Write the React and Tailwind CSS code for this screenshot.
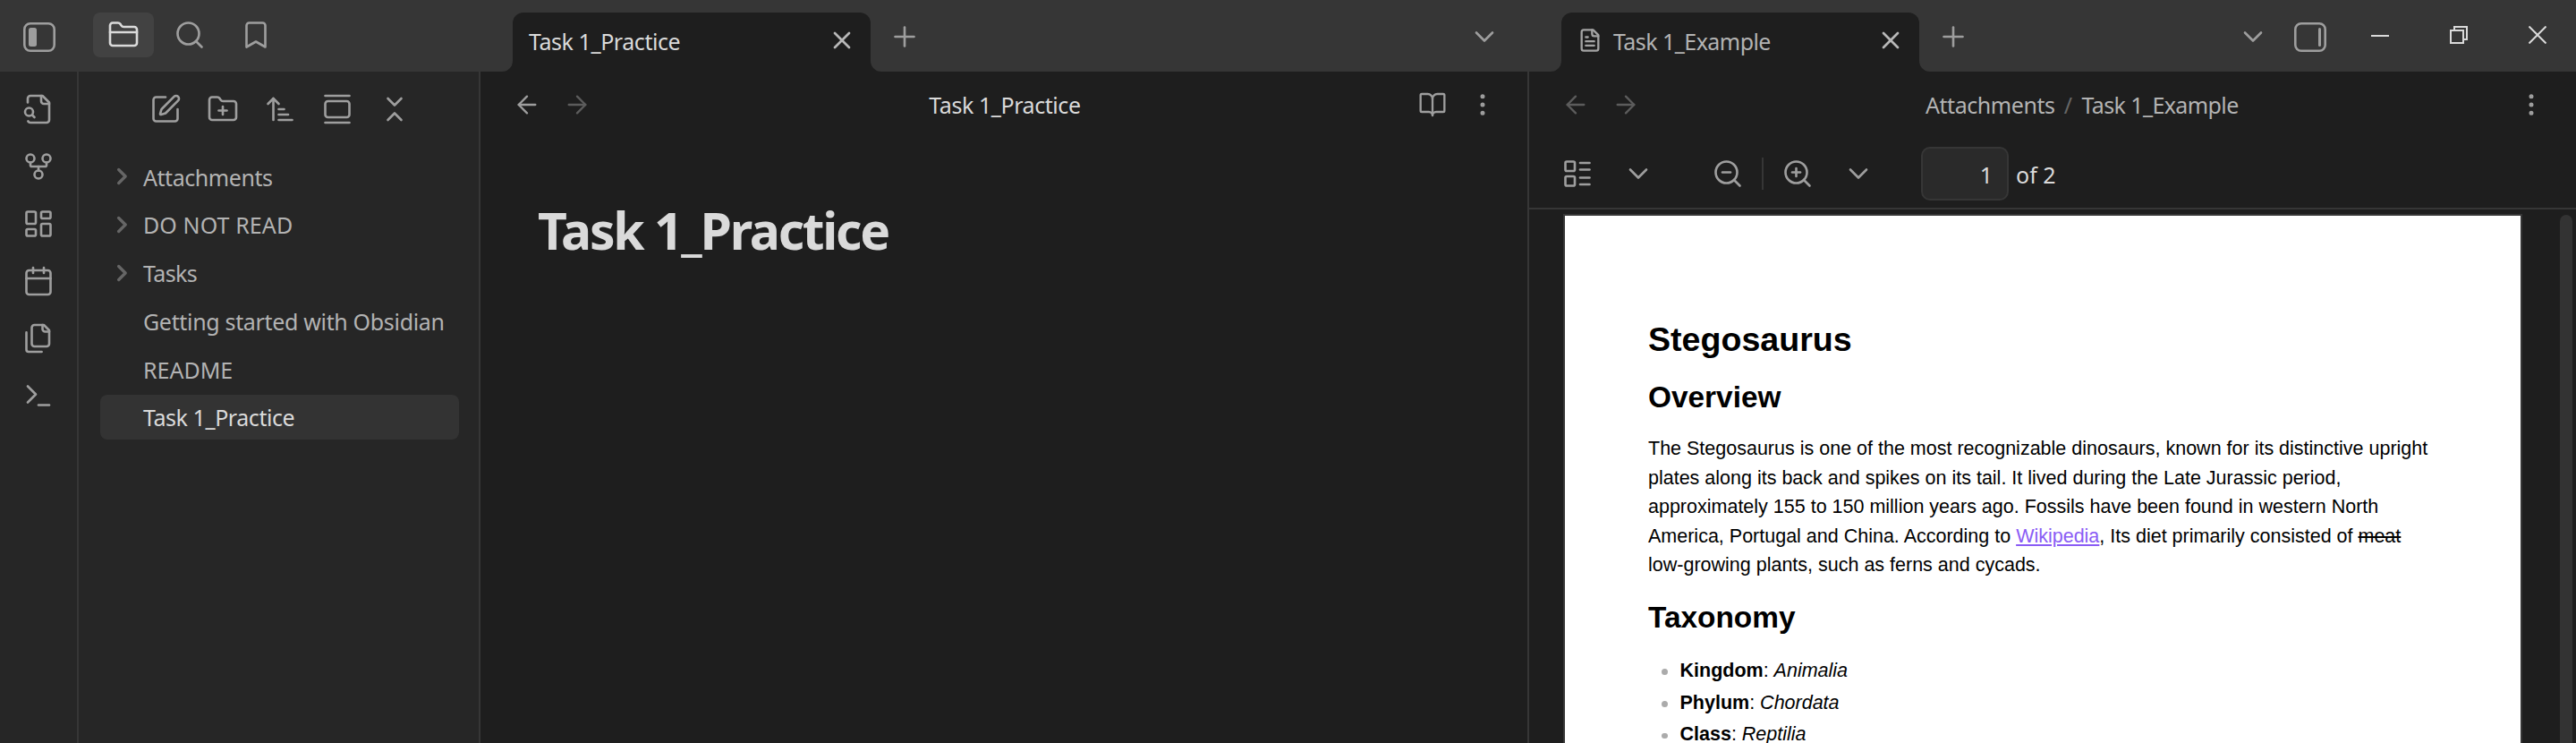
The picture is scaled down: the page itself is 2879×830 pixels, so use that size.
import React from "react";
import {
  ArrowLeft,
  ArrowRight,
  ArrowUpNarrowWide,
  BookOpen,
  Bookmark,
  Calendar,
  ChevronDown,
  ChevronsDownUp,
  FolderClosed,
  FolderPlus,
  GalleryVertical,
  GitFork,
  LayoutDashboard,
  LayoutList,
  Plus,
  Search,
  SquarePen,
  Terminal,
  X,
  ZoomIn,
  ZoomOut,
} from "lucide-react";

const ICON = "block size-9 shrink-0 text-[#9e9e9e]";
const ICON_SM = "block size-8 shrink-0 text-[#9e9e9e]";
const ICON_DIM = "block size-8 shrink-0 text-[#5c5c5c]";

function Glyph({ className, children, strokeWidth = 1.75 }) {
  return (
    <svg
      viewBox="0 0 24 24"
      fill="none"
      stroke="currentColor"
      strokeWidth={strokeWidth}
      strokeLinecap="round"
      strokeLinejoin="round"
      className={className}
    >
      {children}
    </svg>
  );
}

const FileSearch = () => (
  <Glyph className={ICON}>
    <path d="M14 2v4a2 2 0 0 0 2 2h4" />
    <path d="M4.268 21a2 2 0 0 0 1.727 1H18a2 2 0 0 0 2-2V7l-5-5H6a2 2 0 0 0-2 2v3" />
    <path d="m9 18-1.5-1.5" />
    <circle cx="5" cy="14" r="3" />
  </Glyph>
);

const Files = () => (
  <Glyph className={ICON}>
    <path d="M20 7h-3a2 2 0 0 1-2-2V2" />
    <path d="M9 18a2 2 0 0 1-2-2V4a2 2 0 0 1 2-2h7l4 4v10a2 2 0 0 1-2 2Z" />
    <path d="M3 7.6v12.8A1.6 1.6 0 0 0 4.6 22h9.8" />
  </Glyph>
);

const FileText = () => (
  <Glyph className="block size-7 shrink-0 text-[#a3a3a3]" strokeWidth={2}>
    <path d="M15 2H6a2 2 0 0 0-2 2v16a2 2 0 0 0 2 2h12a2 2 0 0 0 2-2V7Z" />
    <path d="M14 2v4a2 2 0 0 0 2 2h4" />
    <path d="M10 9H8" />
    <path d="M16 13H8" />
    <path d="M16 17H8" />
  </Glyph>
);

const MoreVertical = () => (
  <Glyph className={ICON_SM}>
    <circle cx="12" cy="12" r="1" />
    <circle cx="12" cy="5" r="1" />
    <circle cx="12" cy="19" r="1" />
  </Glyph>
);

function SidebarToggle({ side }) {
  return (
    <svg viewBox="0 0 36 33" className="mt-[25px] block h-[33px] w-9 shrink-0 text-[#9e9e9e]">
      <rect x="1.3" y="1.3" width="33.4" height="30.4" rx="6.5" fill="none" stroke="currentColor" strokeWidth="2.6" />
      {side === "left" ? (
        <rect x="6" y="6" width="9" height="21" rx="2.5" fill="currentColor" />
      ) : (
        <rect x="27" y="6" width="3" height="21" rx="1.5" fill="currentColor" />
      )}
    </svg>
  );
}

function Tab({ title, tracking, active, icon }) {
  return (
    <div className="relative mt-3.5 flex h-[66px] w-[400px] shrink-0 items-center rounded-t-xl bg-[#1e1e1e] pr-4 pb-1 pl-[18px]">
      <svg viewBox="0 0 12 12" className="absolute bottom-0 -left-3 size-3 text-[#1e1e1e]">
        <path d="M12 0v12H0A12 12 0 0 0 12 0Z" fill="currentColor" />
      </svg>
      <svg viewBox="0 0 12 12" className="absolute -right-3 bottom-0 size-3 text-[#1e1e1e]">
        <path d="M0 0v12h12A12 12 0 0 1 0 0Z" fill="currentColor" />
      </svg>
      {icon && <span className="mr-3">{icon}</span>}
      <span className={`flex-1 pt-0.5 ${tracking} ${active ? "text-[#dadada]" : "text-[#b3b3b3]"}`}>{title}</span>
      <X strokeWidth={2} className="block size-8 text-[#b8b8b8]" />
    </div>
  );
}

const tree = [
  { name: "Attachments", folder: true, tracking: "tracking-[-0.45px]" },
  { name: "DO NOT READ", folder: true, tracking: "tracking-[0.1px]" },
  { name: "Tasks", folder: true, tracking: "tracking-[-0.6px]" },
  { name: "Getting started with Obsidian", tracking: "tracking-[-0.33px]" },
  { name: "README", tracking: "tracking-[0px]" },
  { name: "Task 1_Practice", active: true, tracking: "tracking-[-0.43px]" },
];

function TreeRow({ item }) {
  return (
    <div
      className={`flex h-[50px] items-center rounded-lg pl-[14px] ${
        item.active ? "bg-[#333333] text-[#dadada]" : "text-[#b3b3b3]"
      }`}
    >
      <span className="mr-3.5 size-5">
        {item.folder && (
          <Glyph className="block size-5 -rotate-90 text-[#666666]" strokeWidth={4}>
            <path d="M3 8L12 17L21 8" />
          </Glyph>
        )}
      </span>
      <span className={`pt-px ${item.tracking}`}>{item.name}</span>
    </div>
  );
}

function TitleBar() {
  return (
    <header className="flex h-20 shrink-0 bg-[#363636]">
      <div className="flex w-[537px] shrink-0 pl-[26px]">
        <SidebarToggle side="left" />
        <div className="mt-3.5 ml-[42px] flex gap-1.5">
          <div className="flex h-[50px] w-[68px] items-center justify-center rounded-lg bg-[#424242]">
            <FolderClosed strokeWidth={1.75} className="block size-9 text-[#dadada]" />
          </div>
          <div className="flex h-[50px] w-[68px] items-center justify-center">
            <Search strokeWidth={1.75} className={ICON} />
          </div>
          <div className="flex h-[50px] w-[68px] items-center justify-center">
            <Bookmark strokeWidth={1.75} className={ICON} />
          </div>
        </div>
      </div>
      <div className="flex w-[1172px] shrink-0 pr-8 pl-9">
        <Tab title="Task 1_Practice" tracking="tracking-[-0.43px]" active />
        <Plus strokeWidth={1.75} className={`${ICON} mt-[23px] ml-5`} />
        <ChevronDown strokeWidth={1.75} className={`${ICON} mt-[23px] ml-auto`} />
      </div>
      <div className="flex flex-1 pr-[33px] pl-9">
        <Tab title="Task 1_Example" tracking="tracking-[-0.55px]" icon={<FileText />} />
        <Plus strokeWidth={1.75} className={`${ICON} mt-[23px] ml-5`} />
        <ChevronDown strokeWidth={1.75} className={`${ICON} mt-[23px] mr-7 ml-auto`} />
        <SidebarToggle side="right" />
        <div className="mt-[29px] ml-[50px] flex gap-[68px] text-[#dadada]">
          <svg viewBox="0 0 20 20" className="block size-5">
            <path d="M0 11h20" stroke="currentColor" strokeWidth="2" />
          </svg>
          <svg viewBox="0 0 20 20" className="block size-5" fill="none" stroke="currentColor" strokeWidth="2">
            <rect x="1" y="5" width="14" height="14" />
            <path d="M5 5V1h14v14h-4" />
          </svg>
          <svg viewBox="0 0 20 20" className="block size-5" stroke="currentColor" strokeWidth="2">
            <path d="M0.5 0.5l19 19M19.5 0.5l-19 19" />
          </svg>
        </div>
      </div>
    </header>
  );
}

function Ribbon() {
  return (
    <nav className="flex w-[88px] shrink-0 flex-col gap-7 border-r-2 border-[#363636] bg-[#262626] pt-6 pl-[25px]">
      <FileSearch />
      <GitFork strokeWidth={1.75} className={ICON} />
      <LayoutDashboard strokeWidth={1.75} className={ICON} />
      <Calendar strokeWidth={1.75} className={ICON} />
      <Files />
      <Terminal strokeWidth={1.75} className={ICON} />
    </nav>
  );
}

function Sidebar() {
  return (
    <aside className="w-[449px] shrink-0 border-r-2 border-[#363636] bg-[#262626]">
      <div className="flex h-[92px] gap-7 pt-6 pl-[79px]">
        <SquarePen strokeWidth={1.75} className={ICON} />
        <FolderPlus strokeWidth={1.75} className={ICON} />
        <ArrowUpNarrowWide strokeWidth={1.75} className={ICON} />
        <GalleryVertical strokeWidth={1.75} className={ICON} />
        <ChevronsDownUp strokeWidth={1.75} className={ICON} />
      </div>
      <div className="flex flex-col gap-[3.8px] pr-[22px] pl-6">
        {tree.map((item) => (
          <TreeRow key={item.name} item={item} />
        ))}
      </div>
    </aside>
  );
}

function NotePane() {
  return (
    <section className="w-[1172px] shrink-0 border-r-2 border-[#363636]">
      <div className="flex h-[74px] items-center pr-[34px] pl-9">
        <div className="flex w-[88px] gap-6">
          <ArrowLeft strokeWidth={1.75} className={ICON_SM} />
          <ArrowRight strokeWidth={1.75} className={ICON_DIM} />
        </div>
        <div className="flex-1 text-center tracking-[-0.43px] text-[#dadada]">Task 1_Practice</div>
        <div className="flex gap-6">
          <BookOpen strokeWidth={1.75} className={ICON_SM} />
          <MoreVertical />
        </div>
      </div>
      <h1 className="mt-[65px] pl-16 text-[57px] leading-[76px] font-bold tracking-[-2.25px] text-[#dadada]">
        Task 1_Practice
      </h1>
    </section>
  );
}

const taxonomy = [
  ["Kingdom", "Animalia"],
  ["Phylum", "Chordata"],
  ["Class", "Reptilia"],
];

function PdfPage() {
  return (
    <article className="mt-[5px] ml-[38px] w-[1072px] shrink-0 border-2 border-b-0 border-[#363636] bg-white pt-[115.6px] pl-[93px] font-['Liberation_Sans',Arial,sans-serif] whitespace-nowrap text-black">
      <h1 className="text-[37.6px] leading-[44px] font-bold">Stegosaurus</h1>
      <h2 className="mt-[23.8px] text-[33.4px] leading-10 font-bold">Overview</h2>
      <p className="mt-[21px] text-[21.5px] leading-[32.4px]">
        The Stegosaurus is one of the most recognizable dinosaurs, known for its distinctive upright
        <br />
        plates along its back and spikes on its tail. It lived during the Late Jurassic period,
        <br />
        approximately 155 to 150 million years ago. Fossils have been found in western North
        <br />
        America, Portugal and China. According to{" "}
        <a className="text-[#8a5cf5] underline">Wikipedia</a>, Its diet primarily consisted of{" "}
        <s>meat</s>
        <br />
        low-growing plants, such as ferns and cycads.
      </p>
      <h2 className="mt-[22.6px] text-[33.4px] leading-10 font-bold">Taxonomy</h2>
      <ul className="mt-[21.7px] pl-[15px] text-[21.5px] leading-[35.8px]">
        {taxonomy.map(([rank, name]) => (
          <li key={rank} className="flex h-[35.8px] items-center">
            <span className="mt-[2px] mr-3.5 size-[6.5px] rounded-full bg-[#ababab]" />
            <span>
              <strong className="font-bold">{rank}</strong>: <em>{name}</em>
            </span>
          </li>
        ))}
      </ul>
    </article>
  );
}

function PdfPane() {
  return (
    <section className="flex flex-1 flex-col">
      <div className="flex h-[74px] shrink-0 items-center pr-[34px] pl-9">
        <div className="flex gap-6">
          <ArrowLeft strokeWidth={1.75} className={ICON_DIM} />
          <ArrowRight strokeWidth={1.75} className={ICON_DIM} />
        </div>
        <div className="ml-[319px] flex flex-1 text-[#b3b3b3]">
          <span className="tracking-[-0.45px]">Attachments</span>
          <span className="w-[30px] text-center text-[#666666]">/</span>
          <span className="tracking-[-0.6px]">Task 1_Example</span>
        </div>
        <MoreVertical />
      </div>
      <div className="flex h-20 shrink-0 items-center border-b-2 border-[#363636] pt-0.5 pl-9">
        <LayoutList strokeWidth={1.75} className={ICON} />
        <ChevronDown strokeWidth={1.75} className={`${ICON} ml-8`} />
        <ZoomOut strokeWidth={1.75} className={`${ICON} ml-16`} />
        <span className="mx-5 h-9 w-0.5 bg-[#363636]" />
        <ZoomIn strokeWidth={1.75} className={ICON} />
        <ChevronDown strokeWidth={1.75} className={`${ICON} ml-8`} />
        <div className="ml-[52px] flex h-[60px] w-[98px] items-center justify-end rounded-[10px] border-2 border-[#363636] bg-[#2a2a2a] pt-0.5 pr-4 text-[#dadada]">
          1
        </div>
        <span className="ml-2 pt-0.5 text-[#dadada]">of 2</span>
      </div>
      <div className="flex flex-1 overflow-hidden">
        <PdfPage />
        <div className="mt-1.5 ml-[42px] w-3.5 rounded-t-full bg-[#333333]" />
      </div>
    </section>
  );
}

export default function App() {
  return (
    <div className="flex h-[830px] w-[2879px] flex-col overflow-hidden bg-[#1e1e1e] font-['Noto_Sans','Open_Sans',sans-serif] text-[25px] leading-[34px]">
      <TitleBar />
      <main className="flex min-h-0 flex-1">
        <Ribbon />
        <Sidebar />
        <NotePane />
        <PdfPane />
      </main>
    </div>
  );
}
